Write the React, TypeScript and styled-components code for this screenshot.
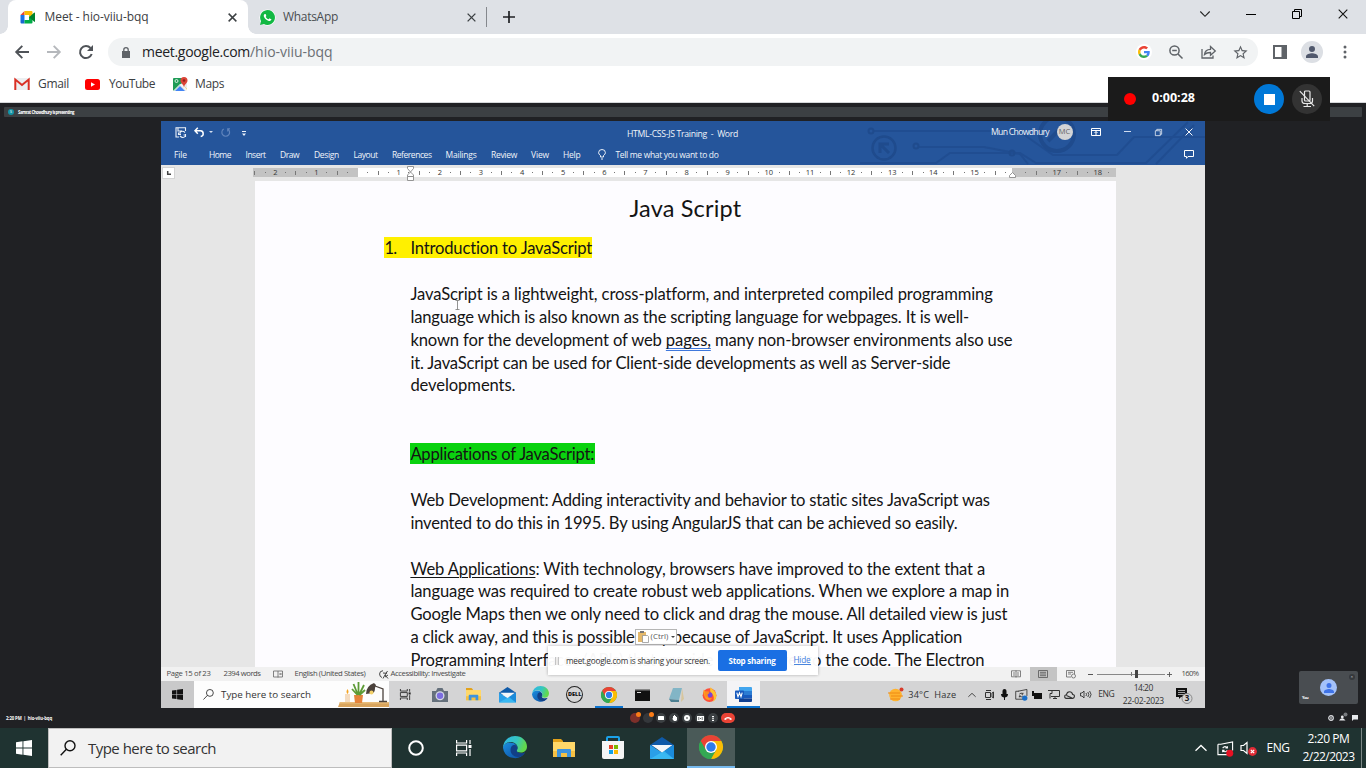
import React, { useLayoutEffect, useRef, useState } from "react";
import styled, { createGlobalStyle } from "styled-components";

const Global = createGlobalStyle`
  * { box-sizing: border-box; }
  html, body { margin: 0; padding: 0; }
  body { width: 1366px; height: 768px; overflow: hidden; background: #202124; font-family: "Open Sans", "Noto Sans", sans-serif; }
  svg { display: block; flex: none; overflow: visible; }
`;

/* ---------- shared text ---------- */
const Text = styled.span<{ $size: number; $color?: string; $weight?: number; $font?: string }>`
  display: inline-block;
  white-space: pre;
  flex: none;
  line-height: 1;
  font-size: ${(p) => p.$size}px;
  color: ${(p) => p.$color || "inherit"};
  font-weight: ${(p) => p.$weight || 400};
  font-family: ${(p) => p.$font || "inherit"};
`;
const TextSlot = styled.span<{ $w: number; $gap?: number; $lift?: number }>`
  display: inline-flex;
  flex: none;
  width: ${(p) => p.$w}px;
  margin-left: ${(p) => p.$gap || 0}px;
  margin-top: ${(p) => p.$lift || 0}px;
`;

type LabelProps = {
  w: number; size: number; gap?: number; lift?: number; color?: string; weight?: number; font?: string;
  children: React.ReactNode;
};
/* Tracks the text so that it fills the given width. */
function Label({ w, size, gap, lift, color, weight, font, children }: LabelProps) {
  const ref = useRef<HTMLSpanElement>(null);
  const [spacing, setSpacing] = useState(0);
  useLayoutEffect(() => {
    const el = ref.current;
    if (!el) return;
    const n = (el.textContent || "").length;
    setSpacing((w - el.getBoundingClientRect().width) / Math.max(1, n));
  }, [w]);
  return (
    <TextSlot $w={w} $gap={gap} $lift={lift}>
      <Text ref={ref} $size={size} $color={color} $weight={weight} $font={font} style={{ letterSpacing: spacing }}>
        {children}
      </Text>
    </TextSlot>
  );
}

const Cell = styled.div<{ $w: number; $gap?: number; $bg?: string; $h?: string; $lift?: number }>`
  flex: none;
  display: flex;
  align-items: center;
  justify-content: center;
  width: ${(p) => p.$w}px;
  height: ${(p) => p.$h || "auto"};
  margin-left: ${(p) => p.$gap || 0}px;
  margin-top: ${(p) => p.$lift || 0}px;
  background: ${(p) => p.$bg || "transparent"};
`;

/* ---------- browser chrome ---------- */
const Desktop = styled.div`
  position: relative;
  width: 1366px;
  height: 768px;
  display: flex;
  flex-direction: column;
  overflow: hidden;
`;
const TabStrip = styled.div`
  height: 34px;
  background: #dee1e6;
  display: flex;
  align-items: center;
`;
const ActiveTab = styled.div`
  position: relative;
  width: 240px;
  height: 34px;
  margin-left: 8px;
  background: #fff;
  border-radius: 8px 8px 0 0;
  display: flex;
  align-items: center;
  &::before, &::after {
    content: "";
    position: absolute;
    bottom: 0;
    width: 8px;
    height: 8px;
  }
  &::before { left: -8px; background: radial-gradient(circle at 0 0, transparent 7.5px, #fff 8px); }
  &::after { right: -8px; background: radial-gradient(circle at 100% 0, transparent 7.5px, #fff 8px); }
`;
const IdleTab = styled.div`
  width: 239px;
  height: 20px;
  display: flex;
  align-items: center;
  border-right: 1px solid #85888d;
`;
const Toolbar = styled.div`
  height: 36px;
  background: #fff;
  display: flex;
  align-items: center;
`;
const Omnibox = styled.div`
  width: 1150px;
  height: 28px;
  margin-left: 15px;
  border-radius: 14px;
  background: #f1f3f4;
  display: flex;
  align-items: center;
`;
const Bookmarks = styled.div`
  height: 33px;
  background: #fff;
  display: flex;
  align-items: center;
  padding-bottom: 4px;
  border-bottom: 1px solid #d5d7da;
`;
const Avatar = styled.div<{ $d: number; $bg: string }>`
  width: ${(p) => p.$d}px;
  height: ${(p) => p.$d}px;
  border-radius: 50%;
  background: ${(p) => p.$bg};
  flex: none;
  display: flex;
  align-items: center;
  justify-content: center;
`;
const Recorder = styled.div`
  position: absolute;
  left: 1108px;
  top: 77px;
  width: 222px;
  height: 44px;
  background: #1b1b1b;
  display: flex;
  align-items: center;
`;

/* ---------- meet ---------- */
const Meet = styled.div`
  height: 625px;
  background: #202124;
  display: flex;
  flex-direction: column;
`;
const PresentBar = styled.div`
  width: 1358px;
  height: 10px;
  margin: 4px 4px;
  background: #3c4043;
  border-radius: 1px;
  display: flex;
  align-items: center;
  flex: none;
`;
const Stage = styled.div`
  display: flex;
  height: 587px;
  padding-left: 161px;
  align-items: flex-end;
`;
const SelfTile = styled.div`
  position: relative;
  width: 59px;
  height: 33px;
  margin: 0 0 4px 94px;
  border-radius: 2px;
  background: #494d51;
  display: flex;
  align-items: center;
  justify-content: center;
`;
const TileName = styled.div`
  position: absolute;
  left: 3px;
  bottom: 4px;
  display: flex;
`;
const TileMic = styled.div`
  position: absolute;
  right: 3px;
  top: 3px;
`;
const Controls = styled.div`
  height: 20px;
  display: flex;
  align-items: center;
`;
const Round = styled.div<{ $bg: string; $gap: number; $w?: number }>`
  position: relative;
  width: ${(p) => p.$w || 10}px;
  height: 10px;
  border-radius: 5px;
  margin-left: ${(p) => p.$gap}px;
  background: ${(p) => p.$bg};
  display: flex;
  align-items: center;
  justify-content: center;
`;
const Alert = styled.i`
  position: absolute;
  top: -1px;
  right: -1px;
  width: 5px;
  height: 5px;
  border-radius: 50%;
  background: #fa7b17;
`;

/* ---------- word ---------- */
const Shared = styled.div`
  position: relative;
  width: 1044px;
  height: 587px;
  background: #e6e6e6;
  display: flex;
  flex-direction: column;
  overflow: hidden;
`;
const Ribbon = styled.div`
  position: relative;
  height: 44px;
  background: #25559b;
  color: #f0f4fa;
  flex: none;
`;
const Circuit = styled.svg`
  position: absolute;
  left: 699px;
  top: 0;
`;
const RibbonRow = styled.div<{ $h: number }>`
  position: relative;
  height: ${(p) => p.$h}px;
  display: flex;
  align-items: center;
`;
const RulerRow = styled.div`
  height: 16px;
  display: flex;
  background: #e6e6e6;
  flex: none;
`;
const TabStop = styled.div`
  width: 13px;
  height: 12px;
  margin: 2px 0 0 1px;
  background: #fff;
  border: 1px solid #d4d4d4;
  display: flex;
  align-items: center;
  justify-content: center;
`;
const Ruler = styled.div`
  position: relative;
  margin: 3px 0 0 78px;
  width: 863px;
  height: 9px;
  display: flex;
  background: linear-gradient(90deg, #c3c3c3 105px, #fff 105px, #fff 759px, #c3c3c3 759px);
`;
const Tick = styled.span`
  flex: none;
  width: 10.285px;
  height: 9px;
  display: flex;
  align-items: center;
  justify-content: center;
  font-size: 7.5px;
  line-height: 9px;
  color: #333;
  &:first-child { margin-left: -3.4px; }
`;
const Mark = styled.i<{ $h: number }>`
  width: 1px;
  height: ${(p) => p.$h}px;
  background: #777;
`;
const Indent = styled.svg<{ $x: number; $y: number }>`
  position: absolute;
  left: ${(p) => p.$x}px;
  top: ${(p) => p.$y}px;
`;
const Canvas = styled.div`
  height: 486px;
  padding-left: 94px;
  overflow: hidden;
  flex: none;
`;
const Sheet = styled.div`
  width: 861px;
  height: 486px;
  background: #fdfcff;
  color: #141414;
  font-family: Lato, "Open Sans", sans-serif;
  padding: 13px 0 0 155.4px;
`;
const DocTitle = styled.div`
  height: 28px;
  padding-left: 219px;
  display: flex;
  align-items: center;
`;
const Heading = styled.div`
  margin: 15px 0 24px -26px;
  width: 208px;
  height: 21px;
  padding-left: 0;
  background: #fff000;
  display: flex;
  align-items: center;
`;
const Line = styled.div`
  height: 22.9px;
  display: flex;
  align-items: center;
`;
const Marked = styled.div`
  height: 21px;
  width: 185px;
  background: #0ad20f;
  display: flex;
  align-items: center;
`;
const Grammar = styled.span`
  text-decoration: underline double #3f78dc;
  text-decoration-thickness: 1px;
  text-underline-offset: 2px;
  text-decoration-skip-ink: none;
`;
const Under = styled.span`
  text-decoration: underline;
  text-underline-offset: 2px;
  text-decoration-thickness: 1px;
`;
const StatusBar = styled.div`
  height: 14px;
  background: #f1f1f1;
  display: flex;
  align-items: center;
  color: #4a4a4a;
  flex: none;
`;
const Slider = styled.div`
  position: relative;
  width: 68px;
  height: 1px;
  margin-left: 3px;
  background: #888;
  &::after { content: ""; position: absolute; left: 38px; top: -4px; width: 3px; height: 8px; background: #444; }
  &::before { content: ""; position: absolute; left: 34px; top: -2px; width: 1px; height: 4px; background: #777; }
`;
const InnerTaskbar = styled.div`
  height: 27px;
  background: #d4d4d5;
  display: flex;
  align-items: center;
  flex: none;
`;
const InnerSearch = styled.div`
  width: 195px;
  height: 27px;
  background: #fdfdfd;
  display: flex;
  align-items: center;
`;
const AppTile = styled.div<{ $on?: boolean; $bg?: string; $w?: number; $gap?: number }>`
  width: ${(p) => p.$w || 33.75}px;
  margin-left: ${(p) => p.$gap || 0}px;
  height: 27px;
  flex: none;
  display: flex;
  align-items: center;
  justify-content: center;
  background: ${(p) => p.$bg || "transparent"};
  box-shadow: ${(p) => (p.$on ? "inset 0 -2px #0a72cf" : "none")};
`;
const Stack = styled.div<{ $w: number; $gap: number; $row: number }>`
  width: ${(p) => p.$w}px;
  margin-left: ${(p) => p.$gap}px;
  display: flex;
  flex-direction: column;
  align-items: center;
  gap: ${(p) => p.$row}px;
`;
const Paste = styled.div`
  position: absolute;
  left: 474px;
  top: 508px;
  width: 42px;
  height: 16px;
  background: #fff;
  border: 1px solid #b5b5b5;
  display: flex;
  align-items: center;
`;
const SharePopup = styled.div`
  position: absolute;
  left: 387px;
  top: 525px;
  width: 270px;
  height: 29px;
  background: rgba(255, 255, 255, 0.965);
  box-shadow: 0 0 3px rgba(0, 0, 0, 0.3);
  display: flex;
  align-items: center;
`;
const StopButton = styled.div`
  width: 69px;
  height: 21px;
  margin-left: 7.5px;
  border-radius: 2px;
  background: #1a6fe3;
  display: flex;
  align-items: center;
  justify-content: center;
`;
const Link = styled.span`
  margin-left: 7px;
  border-bottom: 1px solid #4a86dd;
  display: flex;
`;
const Caret = styled.svg`
  position: absolute;
  left: 294px;
  top: 179px;
`;

/* ---------- desktop taskbar ---------- */
const Taskbar = styled.div`
  height: 40px;
  background: #1f3331;
  display: flex;
  align-items: center;
  color: #fff;
`;
const Search = styled.div`
  width: 344px;
  height: 40px;
  background: #f2f2f2;
  border: 1px solid #bdbdbd;
  display: flex;
  align-items: center;
`;
const RunTile = styled.div`
  width: 48px;
  height: 40px;
  margin-left: 1px;
  background: #4a5a58;
  border-bottom: 2px solid #76b9ed;
  display: flex;
  align-items: center;
  justify-content: center;
`;
const Edge = styled.div<{ $gap: number; $h: number; $c: string }>`
  width: 1px;
  height: ${(p) => p.$h}px;
  margin-left: ${(p) => p.$gap}px;
  background: ${(p) => p.$c};
`;

/* ---------- icons ---------- */
const S = ({ s, h, vb, c = "#5f6368", sw = 0, children }: any) => (
  <svg width={s} height={h || s} viewBox={vb || "0 0 24 24"} fill={sw ? "none" : c} stroke={sw ? c : "none"} strokeWidth={sw}>
    {children}
  </svg>
);
const MeetIcon = () => (
  <S s={16} h={16} vb="0 0 16 16">
    <path fill="#ea4335" d="M4.500 2v4H.5z" />
    <path fill="#fbbc04" d="M4.500 2h7q1 0 1 1v3.500L9 9V6H4.500z" />
    <path fill="#1a73e8" d="M.5 6h4v5H.5z" />
    <path fill="#1967d2" d="M.5 11h4v3.500h-3q-1 0-1-1z" />
    <path fill="#00ac47" d="M4.500 14.500V11H9V7.500l3.500 1.500v4.500q0 1-1 1z" />
    <path fill="#00832d" d="M9 8.200l5-4.500q1-.6 1 .4v8.200q0 1-1 .3z" />
  </S>
);
const WhatsApp = () => (
  <S s={15} vb="0 0 24 24">
    <circle cx="12" cy="12" r="13" fill="#fff" />
    <path fill="#12b843" d="M0 24l1.700-6.200A11.900 11.900 0 1 1 6.200 22.300z" />
    <path fill="#fff" d="M17.500 14.400c-.3-.15-1.760-.87-2.030-.97-.28-.1-.47-.15-.67.15-.2.3-.77.97-.94 1.160-.17.2-.35.220-.640.080-.3-.15-1.260-.46-2.400-1.480-.88-.79-1.480-1.760-1.650-2.060-.17-.3-.02-.46.13-.6.13-.14.3-.35.45-.53.15-.17.2-.3.3-.5.1-.19.05-.37-.03-.52-.07-.15-.67-1.600-.91-2.200-.25-.58-.5-.5-.67-.51h-.57c-.2 0-.52.07-.8.37-.27.3-1.040 1.020-1.040 2.480s1.070 2.870 1.220 3.070c.14.2 2.100 3.200 5.080 4.480.7.3 1.260.49 1.690.63.710.22 1.360.19 1.870.11.570-.08 1.760-.71 2-1.410.25-.7.250-1.290.18-1.410-.07-.13-.27-.2-.57-.35z" />
  </S>
);
const Cross = ({ s, c = "#3c4043", w = 1 }: any) => (
  <S s={s} vb="0 0 10 10" c={c} sw={w}><path d="M.7.7l8.600 8.600M9.300.7L.7 9.300" /></S>
);
const Restore = ({ s, c = "#000" }: any) => (
  <S s={s} vb="0 0 10 10" c={c} sw={1}><path d="M.5 2.500h7v7h-7zM2.500 2.500v-2h7v7h-2" /></S>
);
const Dash = ({ w, c = "#000" }: any) => <S s={w} h={1} vb={`0 0 ${w} 1`} c={c}><path d={`M0 0h${w}v1H0z`} /></S>;
const Google = () => (
  <S s={12} vb="0 0 48 48">
    <circle cx="24" cy="24" r="32" fill="#fff" />
    <path fill="#EA4335" d="M24 9.500c3.540 0 6.710 1.220 9.210 3.600l6.850-6.850C35.900 2.380 30.470 0 24 0 14.620 0 6.510 5.380 2.560 13.220l7.980 6.190C12.430 13.720 17.740 9.500 24 9.500z" />
    <path fill="#4285F4" d="M46.980 24.550c0-1.570-.15-3.090-.38-4.550H24v9.020h12.940c-.58 2.960-2.260 5.480-4.780 7.180l7.730 6c4.510-4.180 7.090-10.360 7.090-17.650z" />
    <path fill="#FBBC05" d="M10.530 28.590c-.48-1.450-.76-2.990-.76-4.590s.27-3.140.76-4.590l-7.980-6.190C.92 16.460 0 20.120 0 24c0 3.880.92 7.540 2.560 10.780l7.970-6.190z" />
    <path fill="#34A853" d="M24 48c6.480 0 11.930-2.130 15.890-5.810l-7.730-6c-2.150 1.450-4.920 2.300-8.160 2.300-6.260 0-11.570-4.220-13.470-9.910l-7.980 6.190C6.510 42.620 14.620 48 24 48z" />
  </S>
);
const Person = ({ s, c }: any) => (
  <S s={s} vb="4 4 16 16" c={c}><path d="M12 12a4 4 0 1 0 0-8 4 4 0 0 0 0 8zm0 1.500c-3 0-8 1.400-8 4.500v2h16v-2c0-3.100-5-4.500-8-4.500z" /></S>
);
const Gmail = () => (
  <S s={16} h={12} vb="0 0 16 12">
    <path fill="#eceff1" d="M1 0h14v12H1z" />
    <path fill="none" stroke="#d93025" strokeWidth="2" d="M1.300 12V1.500L8 7l6.700-5.500V12" />
  </S>
);
const YouTube = () => (
  <S s={15} h={11} vb="0 0 15 11"><rect width="15" height="11" rx="2.500" fill="#f00" /><path fill="#fff" d="M6 3.200l4 2.300-4 2.300z" /></S>
);
const Maps = () => (
  <S s={15} h={15} vb="0 0 15 15">
    <rect y="1" width="14" height="13" rx="1.500" fill="#e8eaed" />
    <path fill="#1e9b56" d="M0 2q0-1 1-1h8v5L1 14q-1 0-1-1z" />
    <path fill="#fbc02d" d="M10.500 8.500L14 12v1z" />
    <path fill="#4285f4" d="M2 14l5-5 5 5z" />
    <path stroke="#fff" strokeWidth="1" d="M.5 14l7-7 7 7" fill="none" />
    <circle cx="3.500" cy="4" r="1.500" fill="none" stroke="#fff" strokeWidth=".8" />
    <path fill="#db4437" d="M11 0a3.500 3.500 0 0 1 3.500 3.500c0 2.500-3 3.500-3.500 7-.5-3.500-3.500-4.500-3.500-7A3.500 3.500 0 0 1 11 0z" />
    <circle cx="11" cy="3.500" r="1.300" fill="#8e2018" />
  </S>
);
const Magnifier = ({ s, c, w = 1.200 }: any) => (
  <S s={s} vb="0 0 16 16" c={c} sw={w}><circle cx="10" cy="5.700" r="5" /><path d="M6.400 9.300L.7 15.300" /></S>
);
const Windows = ({ s, c }: any) => (
  <S s={s} vb="0 0 16 16" c={c}><path d="M0 2.200L6.500 1.300v6.300H0zM7.400 1.200L16 0v7.600H7.400zM0 8.400h6.500v6.300L0 13.800zM7.400 8.400H16V16l-8.600-1.200z" /></S>
);
const TaskView = ({ s, c }: any) => (
  <S s={s} vb="0 0 16 16" c={c} sw={1.200}>
    <path d="M.6 0v3h10V0M.6 16v-3h10v3M.6 5.200h10v5.600H.6zM14 0v4M14 9v7" /><path fill={c} stroke="none" d="M12.500 5h3v3h-3z" />
  </S>
);
const EdgeIcon = ({ s }: any) => (
  <S s={s} vb="0 0 24 24">
    <defs>
      <linearGradient id="eg" x1="0" y1="0" x2="1" y2=".3"><stop offset="0" stopColor="#2fb4e8" /><stop offset=".6" stopColor="#35c6c0" /><stop offset="1" stopColor="#62d84c" /></linearGradient>
      <linearGradient id="eb" x1="0" y1="0" x2="1" y2="1"><stop offset="0" stopColor="#1b8ee0" /><stop offset="1" stopColor="#0c4a9c" /></linearGradient>
    </defs>
    <path fill="url(#eb)" d="M0 12c0-3 3-5.500 7-5.500 5 0 7.500 3 7.500 6 0 1-.8 1.600-.8 2.500 0 1.500 2.300 2.500 4.800 2.500 1.500 0 2.500-.5 3.500-1A12 12 0 0 1 0 12z" />
    <path fill="url(#eg)" d="M0 12A12 12 0 0 1 12 0c7 0 12 5 12 10.500 0 4-3 6-6.300 6-2.700 0-4-1-4-2 0-.8.900-1.300.9-3 0-3-3-5.500-7-5.500C4 6 .5 8.500 0 12z" />
    <path fill="#123f86" d="M7.500 14c0-3 1.700-5 4-5.200 2 .5 3 2 3 3.700 0 1-.8 1.600-.8 2.500 0 1.500 2.300 2.500 4.800 2.500 1.500 0 2.500-.5 3.500-1-1.500 2.800-4 4.500-7 4.500-4 0-7.500-3-7.500-7z" />
  </S>
);
const Folder = ({ s }: any) => (
  <S s={s} h={(s * 18) / 22} vb="0 0 22 18">
    <path fill="#e3a21a" d="M0 0h8l2 2v3H0z" /><path fill="#ffd869" d="M0 3h22v15H0z" /><path fill="#f5c043" d="M0 12h22v6H0z" />
    <path fill="#3d93dd" d="M4 18v-7q0-1 1-1h12q1 0 1 1v7h-4v-4H8v4z" />
  </S>
);
const Mail = ({ s }: any) => (
  <S s={s} h={(s * 22) / 24} vb="0 0 24 22">
    <path fill="#0f5aa8" d="M0 8l12-8 12 8v3H0z" />
    <path fill="#2a9fe8" d="M0 8l12 7.500L24 8v14H0z" /><path fill="#1683d6" d="M24 8v14L10 14.500z" opacity=".7" /><path fill="#3fc0f5" d="M0 22l14-8 10 8z" opacity=".75" />
    <path fill="#f4f7fa" d="M1.500 8h21L12 15.500z" />
  </S>
);
const Chrome = ({ s }: any) => (
  <S s={s} vb="0 0 24 24">
    <circle cx="12" cy="12" r="12" fill="#34a853" />
    <path fill="#ea4335" d="M1.600 6A12 12 0 0 1 22.400 6L12 6.500 6.800 15z" />
    <path fill="#fbbc04" d="M22.400 6A12 12 0 0 1 12 24l5.200-9L12 6z" />
    <path fill="#34a853" d="M12 24A12 12 0 0 1 1.600 6l5.200 9 7 2.500z" />
    <circle cx="12" cy="12" r="6" fill="#fff" /><circle cx="12" cy="12" r="4.700" fill="#2f7bea" />
  </S>
);
const Store = () => (
  <S s={24} h={24} vb="0 0 24 24">
    <path fill="none" stroke="#1ba1e8" strokeWidth="2" d="M6 6V2q0-1 1-1h10q1 0 1 1v4" />
    <path fill="#f5f5f5" d="M1 5h22v16q0 2-2 2H3q-2 0-2-2z" />
    <path fill="#e8422a" d="M8 9h4v4H8z" /><path fill="#7cb900" d="M13 9h4v4h-4z" /><path fill="#12a0e6" d="M8 14h4v4H8z" /><path fill="#fdb900" d="M13 14h4v4h-4z" />
  </S>
);
const Up = ({ w, c }: any) => <S s={w} h={w / 2} vb="0 0 12 6" c={c} sw={1.300}><path d="M.5 5.700L6 .5l5.500 5.200" /></S>;
const MicOff = () => (
  <S s={16} h={18} vb="0 0 16 18" c="#e8e8e8" sw={1.200}>
    <rect x="5.500" y="1" width="5.500" height="10" rx="1" /><path d="M3 8v3q0 2.500 3 2.500h5q2.500 0 2.500-2.500V8M8.200 13.500V16M4.500 16.500h7.500M.8 1.200l14.400 15" />
  </S>
);
const SyncIcon = ({ s, c, dot }: any) => (
  <S s={s} h={s} vb="0 0 18 18" c={c} sw={1.200}>
    <path d="M1 4.500h4M1 4.500v11h11M4 4.500L16.500 2v9M6 8.500q2.500-3 5 0M11 6.500v2H9M11 11q-2.500 3-5 0M6 13v-2h2" />
    <circle cx="13.500" cy="14" r="3.700" fill={dot} stroke="none" />
  </S>
);
const Desk = () => (
  <S s={51} h={25} vb="0 0 51 25">
    <path fill="#d9a45c" d="M2 20h49v5H0z" /><path fill="#e9bd7b" d="M2 20h49v1.500H1z" />
    <path fill="#f4dcc0" d="M7 12h5v8H7z" /><path fill="#f6a623" d="M9.500 7q2 3 0 5-2-2 0-5z" />
    <path fill="#e5833a" d="M16 13h9l-1 8h-7z" />
    <path stroke="#5d9b36" strokeWidth="1.800" fill="none" d="M20.500 13V0M20 13L15.500 2M21 13l5-10M19.500 13L14 7M21.500 13l5.500-5" />
    <path fill="#4b423c" d="M28 12q0-8 8-11l2 2-1 3q0 4-2 5z" /><circle cx="33.500" cy="10.500" r="2" fill="#f3d16b" />
    <path stroke="#4b423c" strokeWidth="1.300" fill="none" d="M37 4l8 3v12M41 19.500h8" />
  </S>
);
const FirefoxIcon = () => (
  <S s={15} vb="0 0 24 24">
    <circle cx="12" cy="13" r="11" fill="#ff4f38" />
    <path fill="#ffc32e" d="M14 0c1 3 4 4 6.500 7 4 5 3.500 13-3 16.500 2-4 2-9-1-12-2-2-5-5-2.500-11.500z" />
    <path fill="#ff9a1f" d="M3 4l2.500 3h5l2.500 3-3 1.500c-3 3.500 1 8 6 6-2 4.500-9 4-11-.5C3 13 1 9 3 4z" />
    <circle cx="12.500" cy="12.500" r="4.300" fill="#7a44d6" />
    <path fill="#ff8a20" d="M5 8q4-1.500 7 1.500l-3 2.500q-.5 3 2 4.500-5 .5-6-3z" />
  </S>
);
const WordIcon = () => (
  <S s={17} h={15} vb="0 0 17 15">
    <path fill="#41a5ee" d="M4 0h12q1 0 1 1v3H4z" /><path fill="#2b7cd3" d="M4 4h13v4H4z" /><path fill="#185abd" d="M4 8h13v3.500H4z" /><path fill="#103f91" d="M4 11.500h13V14q0 1-1 1H4z" />
    <rect y="3.500" width="9" height="8.500" rx=".8" fill="#185abd" /><path stroke="#fff" fill="none" strokeWidth="1.100" d="M1.800 5.600l1.200 4.200 1.500-4 1.500 4 1.200-4.200" />
  </S>
);
const MoreDots = () => <S s={4} h={14} vb="0 0 4 14"><circle cx="2" cy="2" r="1.500" /><circle cx="2" cy="7" r="1.500" /><circle cx="2" cy="12" r="1.500" /></S>;

const menu: [string, number, number][] = [
  ["File", 13, 13], ["Home", 22, 22], ["Insert", 20, 14.500], ["Draw", 19, 14.500], ["Design", 25, 15], ["Layout", 24, 14.500],
  ["References", 39.500, 14.500], ["Mailings", 31, 14], ["Review", 26, 14.500], ["View", 18, 14], ["Help", 17.500, 14],
];

const DocLine = ({ w, children }: any) => <Line><Label w={w} size={16.600} lift={1.500}>{children}</Label></Line>;

function RulerScale() {
  const ticks = [];
  for (let q = -10; q <= 73; q++) {
    const n = Math.abs(q / 4);
    const m = Math.abs(q) % 4;
    ticks.push(
      <Tick key={q}>
        {m === 0 ? (n === 0 || n === 16 ? "" : n) : <Mark $h={m === 2 ? 4 : 1} />}
      </Tick>
    );
  }
  return (
    <Ruler>
      {ticks}
      <Indent $x={153.500} $y={-2} width="7" height="15" viewBox="0 0 7 15" fill="#fff" stroke="#8a8a8a" strokeWidth=".9">
        <path d="M.5.500h6v2l-3 3.500-3-3.500zM3.500 6l3 3v1.500h-6V9zM.5 10.500h6v4h-6z" />
      </Indent>
      <Indent $x={756} $y={4} width="7" height="6" viewBox="0 0 7 6" fill="#fff" stroke="#8a8a8a" strokeWidth=".9">
        <path d="M3.500.5l3 3v2h-6v-2z" />
      </Indent>
    </Ruler>
  );
}

function WordWindow() {
  return (
    <Shared>
      <Ribbon>
        <Circuit width="345" height="44" fill="none" stroke="#1f4b8d" strokeWidth="2">
          <path d="M14 10h145l14 10 20 14h64l17-18h71M58 26h66l36 7 8 10M0 42h76l14-10h70l16 10h110l42-41M296 43l38-39" opacity=".75" />
          <circle cx="11" cy="10" r="2.500" /><circle cx="56" cy="25" r="2.500" /><circle cx="152" cy="32" r="2.500" />
          <circle cx="24" cy="27" r="11.500" strokeWidth="2.500" /><path d="M20 32V23h9M20 23l9 9" strokeWidth="3" />
          <circle cx="197" cy="13" r="17" strokeWidth="4" /><path d="M188 20l14-14" strokeWidth="4" />
        </Circuit>
        <RibbonRow $h={22}>
          <Cell $w={12} $gap={13}><S s={11} vb="0 0 11 11" c="#eef3fa" sw={1.100}><path d="M4 10H1V.7h9.500V4M3 1v3h4M10 5.500Q7.500 3 5 5.500v2M5 9q3 3 5.500 0V7M3.500 5.500v2H6M10.500 10V8H8.500" /></S></Cell>
          <Cell $w={12} $gap={7}><S s={10} vb="0 0 10 10" c="#fff" sw={1.500}><path d="M3.800.8L1 3.800l2.800 3M1 3.800h5.500Q9.300 4 9.200 7q0 2-2.500 2.500" /></S></Cell>
          <Cell $w={6} $gap={3}><S s={4} h={2} vb="0 0 4 2" c="#d5dff0"><path d="M0 0h4L2 2z" /></S></Cell>
          <Cell $w={10} $gap={6}><S s={9} vb="0 0 10 10" c="#6185bd" sw={1.300}><path d="M7.500 1.200A4.300 4.300 0 1 1 3 1.200M7.500 4V.8H10" /></S></Cell>
          <Cell $w={6} $gap={11} $lift={2}><S s={4} h={5} vb="0 0 4 5" c="#eef3fa"><path d="M0 0h4v1H0zM0 2.500h4L2 5z" /></S></Cell>
          <Label w={111} size={8.700} gap={380} lift={4}>HTML-CSS-JS Training  -  Word</Label>
          <Label w={58} size={8.700} gap={253}>Mun Chowdhury</Label>
          <Cell $w={16} $gap={7.500} $lift={-1}><Avatar $d={16} $bg="#d3d4d6"><Text $size={7.500} $color="#666">MC</Text></Avatar></Cell>
          <Cell $w={10} $gap={18}><S s={10} h={8} vb="0 0 10 8" c="#fff" sw={1}><path d="M.5.5h9v7h-9zM.5 2.500h9M5 7V3.500M3.500 5L5 3.500 6.500 5" /></S></Cell>
          <Cell $w={8} $gap={22.500} $lift={-1}><Dash w={7} c="#cfdcf0" /></Cell>
          <Cell $w={8} $gap={23.500}><Restore s={7} c="#fff" /></Cell>
          <Cell $w={8} $gap={22.500}><Cross s={8} c="#fff" w={1.200} /></Cell>
        </RibbonRow>
        <RibbonRow $h={23}>
          {menu.map(([t, w, g]) => <Label key={t} w={w} size={8.500} gap={g} lift={2}>{t}</Label>)}
          <Cell $w={8} $gap={17.500}><S s={8} h={11} vb="0 0 8 11" c="#fff" sw={.9}><path d="M2.500 8V6.500Q.6 5.300.6 3.700a3.400 3.200 0 0 1 6.800 0q0 1.600-1.900 2.800V8zM3 10h2" /></S></Cell>
          <Label w={103} size={8.500} gap={9.500} lift={2}>Tell me what you want to do</Label>
          <Cell $w={10} $gap={465.500}><S s={10} h={9} vb="0 0 10 9" c="#fff" sw={1}><path d="M.5.5h9v6H4L2.500 8.300V6.500h-2z" /></S></Cell>
        </RibbonRow>
      </Ribbon>
      <RulerRow>
        <TabStop><S s={4} h={4} vb="0 0 4 4" c="#444" sw={1.500}><path d="M.7 0v3.300H4" /></S></TabStop>
        <RulerScale />
      </RulerRow>
      <Canvas>
        <Sheet>
          <DocTitle><Label w={112} size={23.500} lift={1}>Java Script</Label></DocTitle>
          <Heading>
            <Label w={12} size={16.600} lift={2}>1.</Label>
            <Label w={182} size={16.600} gap={14} lift={2}>Introduction to JavaScript</Label>
          </Heading>
          <DocLine w={582}>JavaScript is a lightweight, cross-platform, and interpreted compiled programming</DocLine>
          <DocLine w={559}>language which is also known as the scripting language for webpages. It is well-</DocLine>
          <DocLine w={602}>known for the development of web <Grammar>pages,</Grammar> many non-browser environments also use</DocLine>
          <DocLine w={540}>it. JavaScript can be used for Client-side developments as well as Server-side</DocLine>
          <DocLine w={105}>developments.</DocLine>
          <Line /><Line />
          <Line><Marked><Label w={184} size={16.600} lift={2}>Applications of JavaScript:</Label></Marked></Line>
          <Line />
          <DocLine w={580}>Web Development: Adding interactivity and behavior to static sites JavaScript was</DocLine>
          <DocLine w={547}>invented to do this in 1995. By using AngularJS that can be achieved so easily.</DocLine>
          <Line />
          <DocLine w={575}><Under>Web Applications</Under>: With technology, browsers have improved to the extent that a</DocLine>
          <DocLine w={599}>language was required to create robust web applications. When we explore a map in</DocLine>
          <DocLine w={597}>Google Maps then we only need to click and drag the mouse. All detailed view is just</DocLine>
          <DocLine w={552}>a click away, and this is possible only because of JavaScript. It uses Application</DocLine>
          <DocLine w={574}>Programming Interfaces (APIs) that provide extra power to the code. The Electron</DocLine>
        </Sheet>
      </Canvas>
      <StatusBar>
        <Label w={44} size={7.700} gap={5.500}>Page 15 of 23</Label>
        <Label w={37} size={7.700} gap={13}>2394 words</Label>
        <Cell $w={10} $gap={12}><S s={10} h={8} vb="0 0 10 8" c="#666" sw={.8}><path d="M5 1v6.500M5 1H.5v6H5M5 1h4.500v6H5M6.500 3l2 2m0-2l-2 2" /></S></Cell>
        <Label w={71} size={7.700} gap={12}>English (United States)</Label>
        <Cell $w={10} $gap={13}><S s={10} h={9} vb="0 0 10 9" c="#444" sw={1}><path d="M4 .7Q.5 1 .6 4T3 7.500M4 3l4 .3M8.500 1L6 5l3 3.500M6 5L4 8.500M6 7l3-2" /></S></Cell>
        <Label w={75} size={7.700} gap={2}>Accessibility: Investigate</Label>
        <Cell $w={10} $gap={545}><S s={10} h={8} vb="0 0 10 8" c="#666" sw={.8}><path d="M.5.800h9v6h-9zM5 .5v7M2 3h2M2 5h2M6 3h2M6 5h2" /></S></Cell>
        <Cell $w={27} $gap={9} $bg="#c4c4c4" $h="14px"><S s={10} h={8} vb="0 0 10 8" c="#555" sw={.8}><path d="M.5.500h9v7h-9zM2 2.300h6M2 4h6M2 5.700h6" /></S></Cell>
        <Cell $w={10} $gap={9}><S s={10} h={8} vb="0 0 10 8" c="#666" sw={.8}><path d="M5 7H.5V.5h8V4M2 2.300h5M2 4h3" /><circle cx="7.500" cy="6" r="2" /></S></Cell>
        <Cell $w={6} $gap={12}><Dash w={5} c="#555" /></Cell>
        <Slider />
        <Cell $w={6} $gap={2}><S s={5} vb="0 0 5 5" c="#555" sw={.9}><path d="M0 2.500h5M2.500 0v5" /></S></Cell>
        <Label w={17} size={7.700} gap={9}>160%</Label>
      </StatusBar>
      <InnerTaskbar>
        <Cell $w={33} $h="27px" $bg="#c9c9ca"><Windows s={11} c="#111" /></Cell>
        <InnerSearch>
          <Cell $w={12} $gap={8}><Magnifier s={11} c="#222" /></Cell>
          <Label w={90} size={9.800} gap={7} color="#333">Type here to search</Label>
          <Cell $w={51} $gap={27}><Desk /></Cell>
        </InnerSearch>
        <AppTile><TaskView s={11} c="#222" /></AppTile>
        <AppTile><S s={16} h={14} vb="0 0 16 14"><path fill="#65707c" d="M0 3h4l1.500-3h5L12 3h4v11H0z" /><circle cx="8" cy="7.800" r="4.500" fill="#d5d9e8" /><circle cx="8" cy="7.800" r="3.200" fill="#7b6de0" /></S></AppTile>
        <AppTile><Folder s={15} /></AppTile>
        <AppTile><Mail s={17} /></AppTile>
        <AppTile><EdgeIcon s={17} /></AppTile>
        <AppTile><Avatar $d={17} $bg="#222"><Avatar $d={15} $bg="#d4d4d5"><Text $size={5.500} $weight={800} $color="#111">DELL</Text></Avatar></Avatar></AppTile>
        <AppTile $w={28} $gap={3} $on><Chrome s={16} /></AppTile>
        <AppTile $gap={3}><S s={15} h={12} vb="0 0 15 12"><path fill="#111" d="M0 0h15v12H0z" /><path fill="#888" d="M0 0h15v1.500H0z" /><path fill="#ddd" d="M2 3h4v1H2z" /></S></AppTile>
        <AppTile><S s={15} h={14} vb="0 0 15 14"><path fill="#d7c69e" d="M13 0l2 11-3 3z" /><path fill="#82b5c6" d="M4 0h9l-3 12-10-1z" /><path fill="#4c7f92" d="M0 11l10 1v2H2z" /></S></AppTile>
        <AppTile><FirefoxIcon /></AppTile>
        <AppTile $on $bg="#f4f4f6" $w={33}><WordIcon /></AppTile>
        <Cell $w={16} $gap={127.500}><S s={15} h={14} vb="0 0 15 14"><circle cx="7.500" cy="7" r="6.300" fill="#ffb32e" /><path stroke="#f08a13" strokeWidth="1.200" d="M0 5h12M3 8h12M2 11h10" /><circle cx="13.500" cy="1.500" r="2" fill="#d83b2a" /></S></Cell>
        <Label w={48} size={9.200} gap={5} color="#333" lift={1}>34°C  Haze</Label>
        <Cell $w={9} $gap={11.500}><Up w={8} c="#333" /></Cell>
        <Cell $w={10} $gap={7.500}><S s={9} h={10} vb="0 0 9 10" c="#333" sw={1}><path d="M.5 2.500h5v5h-5zM7 3v4l1.500 1V2zM1 .5h5M1 9.500h5" /></S></Cell>
        <Cell $w={8} $gap={6.500}><S s={7} h={11} vb="0 0 7 11" c="#111"><rect x="1.500" width="4" height="7" rx="2" /><path d="M0 5h7q0 3-3 3.500V11H3V8.500Q0 8 0 5z" /></S></Cell>
        <Cell $w={12} $gap={6.500}><SyncIcon s={13} c="#333" dot="#1b6fc8" /></Cell>
        <Cell $w={12} $gap={4.500}><S s={11} h={8} vb="0 0 11 8" c="#111"><path d="M1 2h9v6H2V5H0V0h2v2z" /></S></Cell>
        <Cell $w={12} $gap={4}><S s={12} h={9} vb="0 0 12 9" c="#333" sw={1}><path d="M3 .5h8.500v6H3M0 .5h4v3H2v5M7 7v1.500M5 8.500h4" /></S></Cell>
        <Cell $w={12} $gap={4}><S s={11} h={8} vb="0 0 11 8" c="#333" sw={1.100}><path d="M2 7.400Q.3 6.800.7 5 1 3.800 2.500 3.700 3 .7 5.500.7T8.700 3.500q2 .2 1.700 2.200-.2 1.500-1.700 1.700zM2.500 4.500L8 7" /></S></Cell>
        <Cell $w={12} $gap={4}><S s={12} h={9} vb="0 0 12 9" c="#333" sw={.9}><path d="M.5 3v3H2l2 2V1L2 3zM6 3q1 1.500 0 3M7.800 2q2 2.500 0 5M9.600 1q3 3.500 0 7" /></S></Cell>
        <Label w={16} size={8.500} gap={6.500} color="#333">ENG</Label>
        <Stack $w={42} $gap={8} $row={4}>
          <Label w={19} size={8.500} color="#333">14:20</Label>
          <Label w={41} size={8.500} color="#333">22-02-2023</Label>
        </Stack>
        <Cell $w={17} $gap={12} $lift={3}><S s={17} h={16} vb="0 0 17 16"><path fill="#111" d="M0 0h11v9H5l-2 2V9H0z" /><path stroke="#ddd" d="M2 2.500h7M2 4.500h7M2 6.500h7" strokeWidth=".7" /><circle cx="11" cy="10.500" r="5" fill="#d4d4d5" stroke="#777" strokeWidth=".8" /><text x="11" y="13.300" fontSize="8" fontWeight="700" textAnchor="middle" fill="#222">3</text></S></Cell>
      </InnerTaskbar>
      <Caret width="5" height="10" viewBox="0 0 5 10" fill="none" stroke="#777" strokeWidth=".8"><path d="M.5.500h4M.5 9.500h4M2.500.5v9" /></Caret>
      <Paste>
        <Cell $w={10} $gap={2.500}><S s={11} h={12} vb="0 0 11 12"><path fill="#e5b96b" d="M0 1h8v10H0z" /><path fill="#777" d="M2 0h4v2H2z" /><path fill="#fff" stroke="#888" strokeWidth=".7" d="M4.500 4.500h5l1 1v6h-6z" /></S></Cell>
        <Label w={18} size={7.800} gap={2} color="#555">(Ctrl)</Label>
        <Cell $w={4} $gap={2}><S s={4} h={2} vb="0 0 4 2" c="#444"><path d="M0 0h4L2 2z" /></S></Cell>
      </Paste>
      <SharePopup>
        <Cell $w={4} $gap={7}><S s={4} h={8} vb="0 0 4 8" c="#c4c4c4"><path d="M0 0h1.300v8H0zM2.700 0H4v8H2.700z" /></S></Cell>
        <Label w={144} size={8.200} gap={7} color="#333" lift={1}>meet.google.com is sharing your screen.</Label>
        <StopButton><Label w={47} size={8} color="#fff" weight={700}>Stop sharing</Label></StopButton>
        <Link><Label w={17} size={8.200} color="#3b7de0">Hide</Label></Link>
      </SharePopup>
    </Shared>
  );
}

export default function App() {
  return (
    <Desktop>
      <Global />
      <TabStrip>
        <ActiveTab>
          <Cell $w={16} $gap={12}><MeetIcon /></Cell>
          <Label w={104} size={12} gap={8.500} color="#3c4043">Meet - hio-viiu-bqq</Label>
          <Cell $w={10} $gap={78.500}><Cross s={9} w={1.600} /></Cell>
        </ActiveTab>
        <IdleTab>
          <Cell $w={16} $gap={11}><WhatsApp /></Cell>
          <Label w={55} size={12} gap={8} color="#4a4d51">WhatsApp</Label>
          <Cell $w={10} $gap={128}><Cross s={9} w={1.500} /></Cell>
        </IdleTab>
        <Cell $w={12} $gap={16}><S s={12} vb="0 0 12 12" c="#202124" sw={1.700}><path d="M0 6h12M6 0v12" /></S></Cell>
        <Cell $w={12} $gap={684} $lift={-6}><S s={10} h={6} vb="0 0 10 6" c="#222" sw={1.100}><path d="M.3.5L5 5.300 9.700.5" /></S></Cell>
        <Cell $w={10} $gap={35} $lift={-5}><Dash w={10} /></Cell>
        <Cell $w={10} $gap={36} $lift={-6}><Restore s={10} /></Cell>
        <Cell $w={10} $gap={36} $lift={-6}><Cross s={10} c="#111" w={1.100} /></Cell>
      </TabStrip>
      <Toolbar>
        <Cell $w={14} $gap={15}><S s={14} vb="0 0 14 14" c="#4f5358" sw={1.900}><path d="M14 7H1.500M7.300.8L1.200 7l6.100 6.200" /></S></Cell>
        <Cell $w={14} $gap={18}><S s={14} vb="0 0 14 14" c="#b5b8bc" sw={1.900}><path d="M0 7h12.500M6.700.8L12.800 7l-6.100 6.200" /></S></Cell>
        <Cell $w={14} $gap={18}><S s={14} vb="0 0 14 14" c="#4f5358" sw={2}><path d="M12.700 9A6 6 0 1 1 11.500 3" /><path fill="#4f5358" stroke="none" d="M14 0v6H8z" /></S></Cell>
        <Omnibox>
          <Cell $w={10} $gap={13}><S s={8} h={11} vb="0 0 8 11"><path fill="#5f6368" d="M0 4h8v7H0z" /><path fill="none" stroke="#5f6368" strokeWidth="1.300" d="M1.800 4V2.800a2.200 2.200 0 0 1 4.400 0V4" /></S></Cell>
          <Label w={108} size={14} gap={11} color="#202124">meet.google.com</Label>
          <Label w={82.500} size={14} color="#6b6f74">/hio-viiu-bqq</Label>
          <Cell $w={16} $gap={803.500}><Google /></Cell>
          <Cell $w={16} $gap={16}><S s={14} vb="0 0 14 14" sw={1.500}><circle cx="5.500" cy="5.500" r="4.600" /><path d="M9 9l4.500 4.500M3.200 5.500h4.600" /></S></Cell>
          <Cell $w={16} $gap={16}><S s={15} h={14} vb="0 0 15 14" sw={1.300}><path d="M1 4v9h11v-2.500M3.500 9.500q.5-5 6-5.200V1.500L14.300 6l-4.800 4.300V7.500q-4 0-6 2z" /></S></Cell>
          <Cell $w={16} $gap={16}><S s={17} vb="0 0 24 24"><path d="M22 9.240l-7.190-.62L12 2 9.190 8.630 2 9.240l5.460 4.730L5.820 21 12 17.270 18.180 21l-1.630-7.030L22 9.240zM12 15.400l-3.760 2.270 1-4.280-3.320-2.880 4.380-.38L12 6.100l1.710 4.040 4.380.38-3.320 2.880 1 4.280L12 15.400z" /></S></Cell>
        </Omnibox>
        <Cell $w={14} $gap={15}><S s={14} vb="0 0 14 14"><path fillRule="evenodd" d="M0 0h14v14H0zM2 2v10h6.500V2z" /></S></Cell>
        <Cell $w={22} $gap={14}><Avatar $d={22} $bg="#dcdfe4"><Person s={12} c="#50586c" /></Avatar></Cell>
        <Cell $w={6} $gap={18.500}><MoreDots /></Cell>
      </Toolbar>
      <Bookmarks>
        <Cell $w={16} $gap={14}><Gmail /></Cell>
        <Label w={31} size={12} gap={8} color="#3c4043">Gmail</Label>
        <Cell $w={15} $gap={16}><YouTube /></Cell>
        <Label w={46} size={12} gap={9} color="#3c4043">YouTube</Label>
        <Cell $w={16} $gap={17}><Maps /></Cell>
        <Label w={29} size={12} gap={7} color="#3c4043">Maps</Label>
      </Bookmarks>
      <Meet>
        <PresentBar>
          <Cell $w={6} $gap={4}><Avatar $d={6} $bg="#1294a6"><Text $size={3.500} $color="#fff">S</Text></Avatar></Cell>
          <Label w={56} size={4.300} gap={4} color="#fff" weight={700}>Samrat Chowdhury is presenting</Label>
        </PresentBar>
        <Stage>
          <WordWindow />
          <SelfTile>
            <Avatar $d={17} $bg="#a4c2fa"><Person s={10} c="#3f73e8" /></Avatar>
            <TileName><Label w={6} size={4} color="#fff" weight={700}>You</Label></TileName>
            <TileMic><Avatar $d={6} $bg="#36393d"><Text $size={4} $color="#ddd">×</Text></Avatar></TileMic>
          </SelfTile>
        </Stage>
        <Controls>
          <Label w={46} size={4.300} gap={6} color="#fff" weight={700}>2:20 PM  |  hio-viiu-bqq</Label>
          <Round $bg="#7d2f2a" $gap={578}><Alert /></Round>
          <Round $bg="#34373b" $gap={3}><Alert /></Round>
          <Round $bg="#3c4043" $gap={3}><S s={6} h={4} vb="0 0 6 4" c="#fff"><rect width="6" height="4" rx=".5" /></S></Round>
          <Round $bg="#3c4043" $gap={3}><S s={5} h={6} vb="0 0 5 6" c="#fff"><path d="M1 1h1V0h1v1h1v1h1v3L4 6H2L0 3.500h1z" /></S></Round>
          <Round $bg="#3c4043" $gap={3}><S s={6} h={6} vb="0 0 6 6" c="#fff"><path fillRule="evenodd" d="M3 0a3 3 0 1 1 0 6 3 3 0 0 1 0-6zM2.500 2v2h1V2z" /></S></Round>
          <Round $bg="#3c4043" $gap={3}><S s={7} h={5} vb="0 0 7 5" c="#fff"><path fillRule="evenodd" d="M0 0h7v5H0zM1.500 1v3h.7V1zm3.300 0v3h.7V1zM3.100 2v1h.8V2z" /></S></Round>
          <Round $bg="#3c4043" $gap={3}><S s={2} h={5} vb="0 0 2 5" c="#fff"><path d="M0 0h2v1.300H0zM.3 2h1.400v1H.3zM0 3.700h2V5H0z" /></S></Round>
          <Round $bg="#ea4335" $gap={3} $w={14}><S s={8} h={3} vb="0 0 8 3" c="#fff"><path d="M0 2q4-4 8 0L7 3 5.500 2.500V1.500h-3v1L1 3z" /></S></Round>
          <Cell $w={6} $gap={593}><S s={6} vb="0 0 6 6" c="#dadce0" sw={1.200}><circle cx="3" cy="3" r="2.300" /><path d="M3 1.700v2.600" /></S></Cell>
          <Cell $w={8} $gap={5} $lift={-2}><S s={9} h={8} vb="0 0 9 8" c="#e8eaed"><path d="M0 7.500Q3 3 6.500 7.500z" /><circle cx="3.300" cy="4" r="1.400" /><circle cx="6.500" cy="1.500" r="2" fill="#777a7e" /></S></Cell>
          <Cell $w={6} $gap={5}><S s={6} vb="0 0 6 6" c="#e8eaed"><path d="M0 0h6v4.500H1.500L0 6z" /></S></Cell>
        </Controls>
      </Meet>
      <Taskbar>
        <Cell $w={16} $gap={16}><Windows s={16} c="#fff" /></Cell>
        <Cell $w={16} />
        <Search>
          <Cell $w={16} $gap={11}><Magnifier s={16} c="#111" w={1.400} /></Cell>
          <Label w={128} size={15} gap={12} color="#333">Type here to search</Label>
        </Search>
        <Cell $w={16} $gap={16}><S s={16} vb="0 0 16 16" c="#fff" sw={2}><circle cx="8" cy="8" r="6.800" /></S></Cell>
        <Cell $w={16} $gap={32}><TaskView s={16} c="#fff" /></Cell>
        <Cell $w={24} $gap={30.500}><EdgeIcon s={24} /></Cell>
        <Cell $w={22} $gap={26}><Folder s={22} /></Cell>
        <Cell $w={24} $gap={26}><Store /></Cell>
        <Cell $w={24} $gap={25}><Mail s={24} /></Cell>
        <Cell $w={12} />
        <RunTile><Chrome s={24} /></RunTile>
        <Cell $w={12} $gap={460}><Up w={12} c="#fff" /></Cell>
        <Cell $w={18} $gap={9.500}><SyncIcon s={17} c="#fff" dot="#e81123" /></Cell>
        <Cell $w={17} $gap={6}><S s={17} h={15} vb="0 0 17 15"><path fill="none" stroke="#fff" strokeWidth="1.200" d="M1 4.500v5h2.500l3.500 3v-11L3.500 4.500z" /><circle cx="12.500" cy="10.500" r="4.400" fill="#e02b35" /><path stroke="#fff" strokeWidth="1.200" d="M10.800 8.800l3.400 3.400m0-3.400l-3.400 3.400" /></S></Cell>
        <Label w={23} size={12} gap={9.500}>ENG</Label>
        <Stack $w={54} $gap={12} $row={6}>
          <Label w={42} size={12}>2:20 PM</Label>
          <Label w={52} size={12}>2/22/2023</Label>
        </Stack>
        <Edge $gap={5} $h={40} $c="#7c8886" />
      </Taskbar>
      <Recorder>
        <Cell $w={12} $gap={16}><Avatar $d={12} $bg="#ff0000" /></Cell>
        <Label w={43} size={12.500} gap={16} lift={-2} color="#fff" weight={700}>0:00:28</Label>
        <Cell $w={30} $gap={59}><Avatar $d={30} $bg="#0078d7"><S s={11} vb="0 0 11 11" c="#fff"><path d="M0 0h11v11H0z" /></S></Avatar></Cell>
        <Cell $w={30} $gap={8}><Avatar $d={30} $bg="#333333"><MicOff /></Avatar></Cell>
      </Recorder>
    </Desktop>
  );
}
